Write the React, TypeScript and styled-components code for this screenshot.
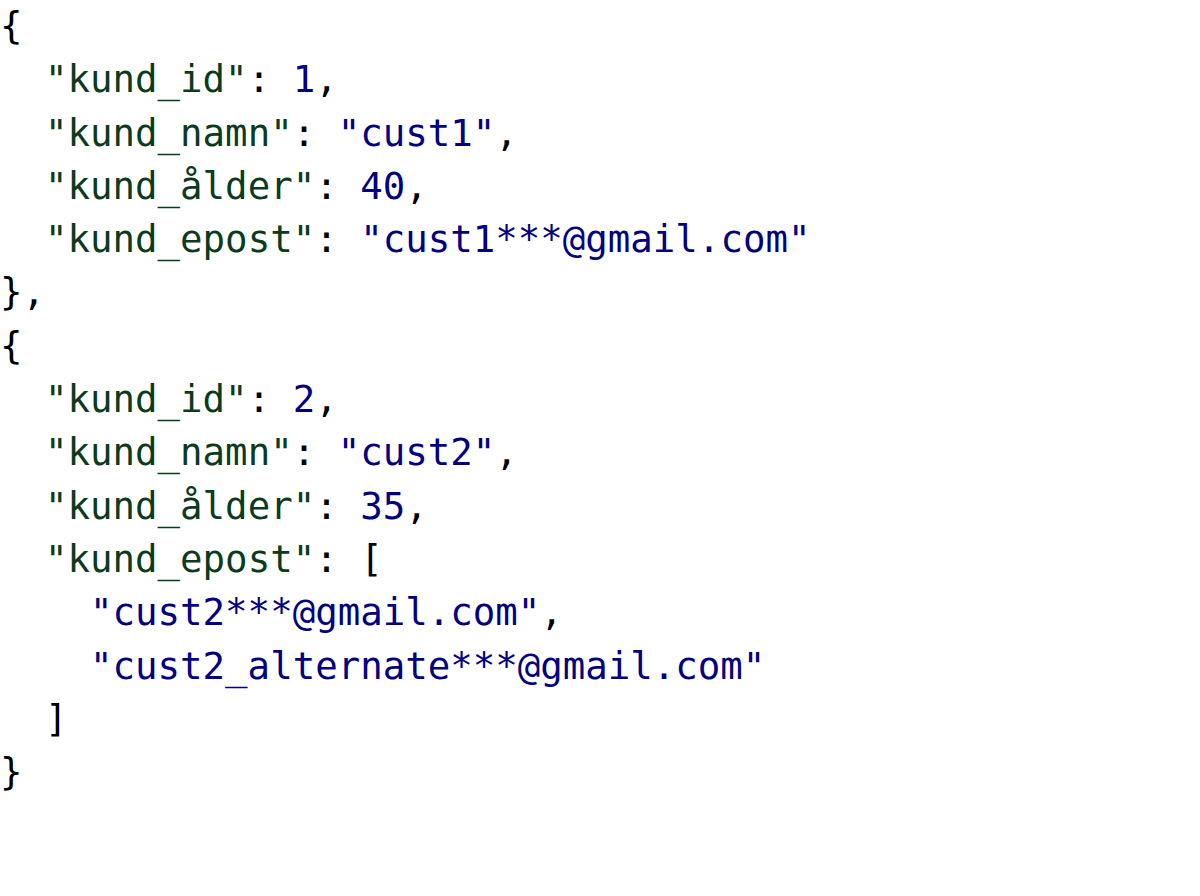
import React from "react";
import styled, { createGlobalStyle } from "styled-components";

const Global = createGlobalStyle`
  html, body { margin: 0; padding: 0; background: #ffffff; }
`;

const Code = styled.pre`
  margin: 0;
  padding: 0;
  font-family: "DejaVu Sans Mono", "Liberation Mono", monospace;
  font-size: 37.4px;
  line-height: 53.3px;
  color: #000000;
  white-space: pre;
`;

type Kind = "key" | "str" | "num" | "punc";

const Tok = styled.span<{ $kind: Kind }>`
  color: ${(p) =>
    p.$kind === "key"
      ? "#0b3a1c"
      : p.$kind === "str" || p.$kind === "num"
      ? "#020080"
      : "#000000"};
`;

const K = ({ t }: { t: string }) => <Tok $kind="key">{t}</Tok>;
const S = ({ t }: { t: string }) => <Tok $kind="str">{t}</Tok>;
const N = ({ t }: { t: string }) => <Tok $kind="num">{t}</Tok>;

export default function App() {
  return (
    <>
      <Global />
      <Code>
        {"{\n  "}
        <K t={'"kund_id"'} />
        {": "}
        <N t="1" />
        {",\n  "}
        <K t={'"kund_namn"'} />
        {": "}
        <S t={'"cust1"'} />
        {",\n  "}
        <K t={'"kund_ålder"'} />
        {": "}
        <N t="40" />
        {",\n  "}
        <K t={'"kund_epost"'} />
        {": "}
        <S t={'"cust1***@gmail.com"'} />
        {"\n},\n{\n  "}
        <K t={'"kund_id"'} />
        {": "}
        <N t="2" />
        {",\n  "}
        <K t={'"kund_namn"'} />
        {": "}
        <S t={'"cust2"'} />
        {",\n  "}
        <K t={'"kund_ålder"'} />
        {": "}
        <N t="35" />
        {",\n  "}
        <K t={'"kund_epost"'} />
        {": [\n    "}
        <S t={'"cust2***@gmail.com"'} />
        {",\n    "}
        <S t={'"cust2_alternate***@gmail.com"'} />
        {"\n  ]\n}"}
      </Code>
    </>
  );
}
